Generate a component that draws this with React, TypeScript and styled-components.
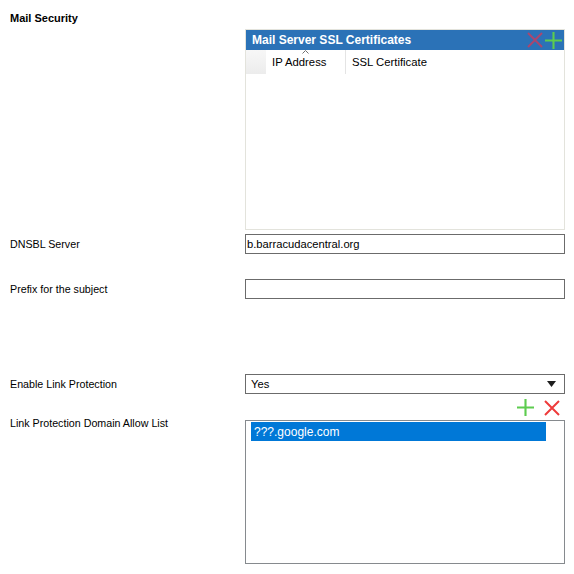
import React from 'react';
import styled, { createGlobalStyle } from 'styled-components';

const GlobalStyle = createGlobalStyle`
	html, body {
		margin: 0;
		padding: 0;
		background: #ffffff;
	}
	body {
		font-family: 'Liberation Sans', Arial, sans-serif;
		font-size: 11px;
		color: #000000;
	}
`;

const Page = styled.div`
	width: 574px;
	height: 574px;
	box-sizing: border-box;
	padding: 11px 9px 0 10px;
`;

const Title = styled.div`
	font-weight: bold;
	font-size: 11px;
	line-height: 14px;
	height: 14px;
	margin-bottom: 4px;
`;

const FieldRow = styled.div<{ $top?: number; $align?: string }>`
	display: flex;
	align-items: ${p => p.$align || 'center'};
	margin-top: ${p => p.$top || 0}px;
`;

const Label = styled.div<{ $shift?: number }>`
	width: 235px;
	flex: none;
	font-size: 10.7px;
	line-height: 13px;
	margin-top: ${p => p.$shift || 0}px;
`;

const Field = styled.div`
	width: 320px;
	flex: none;
`;

/* ---- grid of certificates ---- */

const Grid = styled.div`
	height: 201px;
	box-sizing: border-box;
	border: 1px solid #e3e3dc;
	background: #ffffff;
	display: flex;
	flex-direction: column;
`;

const GridTitle = styled.div`
	height: 20px;
	background: #2b72b7;
	color: #ffffff;
	font-weight: bold;
	font-size: 12px;
	display: flex;
	align-items: center;
	padding-left: 6px;
	justify-content: space-between;
`;

const GridTools = styled.div`
	display: flex;
	align-items: center;
	gap: 2px;
	padding-right: 2px;
`;

const ColumnHeaders = styled.div`
	display: flex;
	height: 24px;
	font-size: 11.3px;
`;

const RowHeaderCell = styled.div`
	width: 20px;
	background: linear-gradient(#f7f7f7, #ececec);
`;

const ColumnHeader = styled.div<{ $width: number }>`
	position: relative;
	width: ${p => p.$width}px;
	box-sizing: border-box;
	padding-left: 6px;
	display: flex;
	align-items: center;
	border-right: 1px solid #e4e4e4;
	&:last-child {
		border-right: none;
	}
`;

const SortCaret = styled.svg`
	position: absolute;
	top: 0;
	left: 36px;
`;

/* ---- inputs ---- */

const TextBox = styled.div`
	height: 20px;
	box-sizing: border-box;
	border: 1px solid #6b6b6b;
	padding-left: 1px;
	display: flex;
	align-items: center;
	font-size: 11.2px;
`;

const Select = styled(TextBox)`
	padding: 0 8px 0 5px;
	justify-content: space-between;
`;

const ListTools = styled.div`
	display: flex;
	justify-content: flex-end;
	gap: 10px;
	padding-right: 5px;
	height: 17px;
	align-items: center;
`;

const ListBox = styled.div`
	height: 144px;
	box-sizing: border-box;
	border: 1px solid #868a8e;
	padding: 1px 18px 0 5px;
`;

const ListItem = styled.div<{ $selected?: boolean }>`
	height: 19px;
	display: flex;
	align-items: center;
	padding-left: 3px;
	font-size: 12px;
	background: ${p => (p.$selected ? '#0078d7' : 'transparent')};
	color: ${p => (p.$selected ? '#ffffff' : '#000000')};
`;

const PlusIcon = ({ color, size }: { color: string; size: number }) => (
	<svg width={size} height={size} viewBox="0 0 16 16">
		<path d="M8 0V16M0 8H16" stroke={color} strokeWidth="2" />
	</svg>
);

const CrossIcon = ({ color, size }: { color: string; size: number }) => (
	<svg width={size} height={size} viewBox="0 0 16 16">
		<path d="M1 1L15 15M15 1L1 15" stroke={color} strokeWidth="2" />
	</svg>
);

const CaretDown = () => (
	<svg width="9" height="6" viewBox="0 0 9 6">
		<path d="M0 0H9L4.5 6Z" fill="#1e1e1e" />
	</svg>
);

const App = () => {
	return (
		<Page>
			<GlobalStyle />
			<Title>Mail Security</Title>

			<FieldRow>
				<Label />
				<Field>
					<Grid>
						<GridTitle>
							<span>Mail Server SSL Certificates</span>
							<GridTools>
								<CrossIcon color="#a9476f" size={16} />
								<PlusIcon color="#5dcc4f" size={17} />
							</GridTools>
						</GridTitle>
						<ColumnHeaders>
							<RowHeaderCell />
							<ColumnHeader $width={80}>
								<SortCaret width="7" height="4" viewBox="0 0 7 4">
									<path d="M0.5 3.5L3.5 0.5L6.5 3.5" stroke="#707070" fill="none" />
								</SortCaret>
								IP Address
							</ColumnHeader>
							<ColumnHeader $width={218}>SSL Certificate</ColumnHeader>
						</ColumnHeaders>
					</Grid>
				</Field>
			</FieldRow>

			<FieldRow $top={4}>
				<Label>DNSBL Server</Label>
				<Field>
					<TextBox>b.barracudacentral.org</TextBox>
				</Field>
			</FieldRow>

			<FieldRow $top={25}>
				<Label>Prefix for the subject</Label>
				<Field>
					<TextBox />
				</Field>
			</FieldRow>

			<FieldRow $top={75}>
				<Label>Enable Link Protection</Label>
				<Field>
					<Select>
						<span>Yes</span>
						<CaretDown />
					</Select>
				</Field>
			</FieldRow>

			<FieldRow $top={5}>
				<Label />
				<Field>
					<ListTools>
						<PlusIcon color="#5dcc4f" size={17} />
						<CrossIcon color="#ee3b3b" size={16} />
					</ListTools>
				</Field>
			</FieldRow>

			<FieldRow $top={4} $align="flex-start">
				<Label $shift={-3}>Link Protection Domain Allow List</Label>
				<Field>
					<ListBox>
						<ListItem $selected>???.google.com</ListItem>
					</ListBox>
				</Field>
			</FieldRow>
		</Page>
	);
};

export default App;
